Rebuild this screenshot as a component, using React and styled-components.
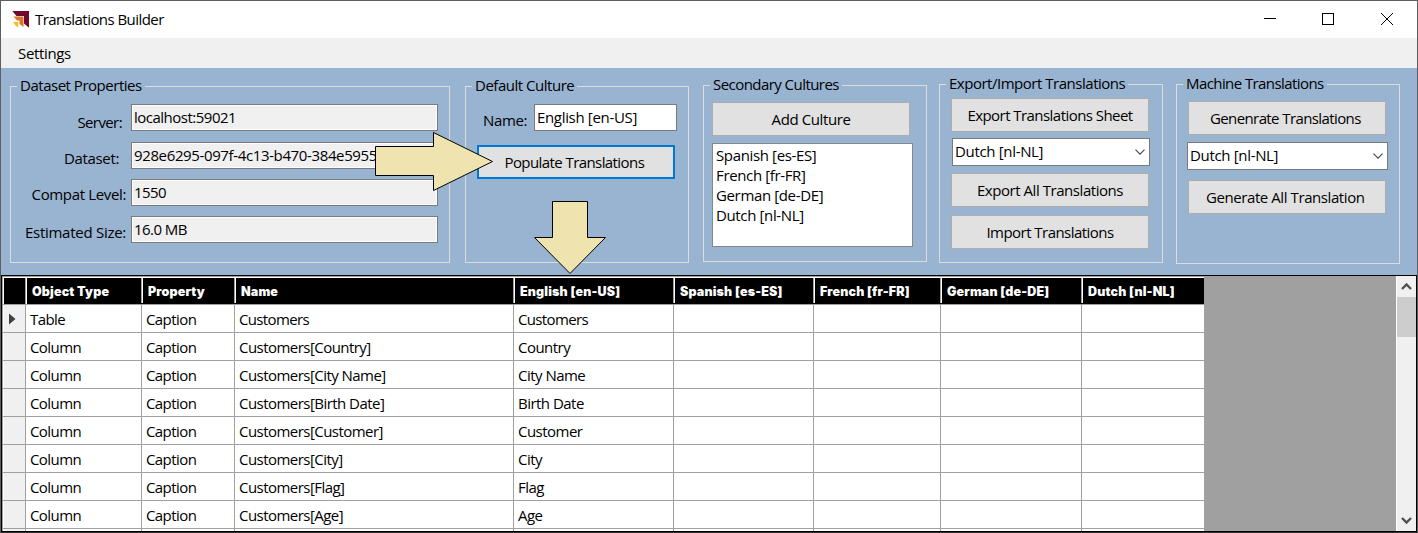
import React from 'react';
import styled, { createGlobalStyle } from 'styled-components';

const Global = createGlobalStyle`
  *{box-sizing:border-box}
  html,body{margin:0;padding:0;overflow:hidden}
  body{font-family:"Open Sans","Noto Sans",sans-serif;font-size:15px;color:#000;}
`;
const Window = styled.div`
  width:1418px;height:533px;display:flex;flex-direction:column;
  border:1px solid #5f5d60;border-bottom-color:#2f2f2f;background:#99b4d1;overflow:hidden;
`;
const Text = styled.span`
  display:block;white-space:pre;line-height:18px;padding-bottom:2px;
  letter-spacing:${p => p.$ls ?? -0.58}px;
`;
const TitleBar = styled.header`
  height:37px;flex:none;background:#fff;display:flex;align-items:center;padding-left:11px;
`;
const Logo = styled.svg`width:18px;height:18px;margin-right:5px;`;
const Controls = styled.svg`margin-left:auto;width:180px;height:37px;`;
const MenuBar = styled.nav`
  height:30px;flex:none;background:#f0f0f0;display:flex;align-items:center;padding:1px 0 0 17px;
`;
const Panel = styled.section`
  height:207px;flex:none;display:flex;align-items:flex-start;padding-left:9px;position:relative;
`;
const Group = styled.fieldset`
  margin:${p => p.$top}px ${p => p.$gap || 0}px 0 0;padding:0;min-width:0;
  width:${p => p.$w}px;height:${p => p.$h}px;border:1px solid #dcdcdc;
  display:flex;flex-direction:column;
`;
const Legend = styled.legend`
  margin:0 0 0 6px;padding:0 3px;height:20px;
`;
const Stack = styled.div`
  display:flex;flex-direction:column;padding:${p => p.$pad};gap:${p => p.$gap || 0}px;
`;
const Field = styled.div`
  display:flex;height:27px;justify-content:flex-end;
  &:nth-child(2){margin-top:1px;}
`;
const FieldLabel = styled(Text)`
  padding-top:${p => p.$pt ?? 9}px;margin-right:${p => p.$mr ?? 6}px;
`;
const Input = styled.div`
  width:${p => p.$w}px;height:27px;flex:none;overflow:hidden;padding:3px 0 0 2px;
  border:1px solid #7a7a7a;background:${p => (p.$ro ? '#f0f0f0' : '#fff')};
  box-shadow:inset 0 0 0 1px #fff;
`;
const Button = styled.button`
  width:198px;height:34px;flex:none;padding:1px 0 0;margin:${p => p.$m || 0};
  display:flex;align-items:center;justify-content:center;font:inherit;color:#000;
  background:#e1e1e1;border:${p => (p.$focus ? '2px solid #0078d7' : '1px solid #adadad')};
`;
const ListBox = styled.div`
  width:201px;height:104px;border:1px solid #828790;background:#fff;padding:2px 3px;
`;
const Select = styled.div`
  width:${p => p.$w}px;height:28px;flex:none;border:1px solid #7a7a7a;background:#fff;
  display:flex;align-items:center;justify-content:space-between;padding:0 4px 0 2px;
  margin:${p => p.$m || 0};
`;
const Arrows = styled.svg`
  position:absolute;left:-1px;top:0;width:700px;height:207px;overflow:visible;z-index:2;
`;
const Grid = styled.section`
  height:257px;flex:none;background:#a0a0a0;border:1px solid #000;display:flex;overflow:hidden;
`;
const Table = styled.div`
  width:1202px;height:255px;padding-left:1px;overflow:hidden;flex:none;background:#a0a0a0;
`;
const Row = styled.div`
  display:grid;grid-template-columns:22px 116px 93px 279px 160px 140px 127px 141px 123px;
`;
const HeadRow = styled(Row)`
  height:28px;background:#000;border-top:1px solid #a0a0a0;box-shadow:inset 0 1px 0 #fff;
  padding-top:1px;
`;
const HeadCorner = styled.div`border-left:1px solid #fff;`;
const HeadCell = styled.div`
  height:${p => (p.$first ? 26 : 25)}px;
  border-left:1px solid #a0a0a0;box-shadow:inset 1px 0 0 #fff;padding:5px 0 0 6px;
`;
const HeadText = styled(Text)`
  font-family:Inter,"Liberation Sans",sans-serif;font-weight:900;font-size:12.5px;color:#fff;
  letter-spacing:0.15px;
`;
const BodyRow = styled(Row)`height:28px;border-top:1px solid #a0a0a0;background:#fff;`;
const RowHead = styled.div`
  background:#f0f0f0;display:flex;align-items:center;padding-left:6px;
  box-shadow:inset 1px 0 0 #fff;
`;
const Cell = styled.div`border-left:1px solid #a0a0a0;padding:5px 0 0 4px;overflow:hidden;`;
const Scroll = styled.div`
  width:20px;height:255px;margin-left:auto;background:#f0f0f0;border-left:1px solid #fff;
  display:flex;flex-direction:column;
`;
const ScrollArrow = styled.svg`width:19px;height:21px;flex:none;`;
const Thumb = styled.div`height:40px;background:#cdcdcd;margin-bottom:auto;`;

const Chevron = () => (
  <svg width="10" height="6" viewBox="0 0 10 6" fill="none" stroke="#444" strokeWidth="1.1"><path d="M.5 .6 5 5.1 9.5 .6" /></svg>
);
const Combo = ({ w, m }) => (
  <Select $w={w} $m={m}><Text $ls={-0.33}>Dutch [nl-NL]</Text><Chevron /></Select>
);

const fields = [
  ['Server:', 'localhost:59021', 9, 9, -0.6, -0.5],
  ['Dataset:', '928e6295-097f-4c13-b470-384e595587c1', 7, 12, -0.35, -0.37],
  ['Compat Level:', '1550', 6, 5, -0.35, -0.55],
  ['Estimated Size:', '16.0 MB', 7, 5, -0.27, -0.55],
];
const heads = ['Object Type', 'Property', 'Name', 'English [en-US]', 'Spanish [es-ES]', 'French [fr-FR]', 'German [de-DE]', 'Dutch [nl-NL]'];
const cultures = ['Spanish [es-ES]', 'French [fr-FR]', 'German [de-DE]', 'Dutch [nl-NL]'];
const rows = ['', 'Country', 'City Name', 'Birth Date', 'Customer', 'City', 'Flag', 'Age'];

export default function App() {
  return (
    <>
      <Global />
      <Window>
        <TitleBar>
          <Logo viewBox="0 0 18 18">
            <path d="M.3 0H17V16.800L12 12.500V5H4.500Z" fill="#6f0a2c" />
            <path d="M1.500 5.500H11.500V16L7.500 13V9.500H5Z" fill="#d9762b" />
            <path d="M1 11H6.300V16.500L4 15Z" fill="#fdc010" />
          </Logo>
          <Text $ls={-0.55}>Translations Builder</Text>
          <Controls viewBox="0 0 180 37" fill="none" stroke="#000" shapeRendering="crispEdges">
            <path d="M27 17.500h12M85.500 12.500h11v11h-11z" />
            <path d="M144 12l12 12M156 12l-12 12" shapeRendering="auto" />
          </Controls>
        </TitleBar>
        <MenuBar><Text $ls={-0.35}>Settings</Text></MenuBar>
        <Panel>
          <Group $top={8} $w={440} $h={187} $gap={15}>
            <Legend><Text $ls={-0.48}>Dataset Properties</Text></Legend>
            <Stack $pad="8px 11px 0 0" $gap={10}>
              {fields.map(([l, v, pt, mr, lls, vls]) => (
                <Field key={l}>
                  <FieldLabel $pt={pt} $mr={mr} $ls={lls}>{l}</FieldLabel>
                  <Input $w={307} $ro><Text $ls={vls}>{v}</Text></Input>
                </Field>
              ))}
            </Stack>
          </Group>
          <Group $top={8} $w={224} $h={187} $gap={14}>
            <Legend><Text $ls={-0.48}>Default Culture</Text></Legend>
            <Stack $pad="8px 11px 0 0">
              <Field><FieldLabel $pt={7} $mr={7} $ls={-0.4}>Name:</FieldLabel><Input $w={143}><Text $ls={-0.33}>English [en-US]</Text></Input></Field>
              <Button $focus $m="14px 0 0 11px"><Text>Populate Translations </Text></Button>
            </Stack>
          </Group>
          <Group $top={7} $w={224} $h={187} $gap={12}>
            <Legend><Text $ls={-0.55}>Secondary Cultures</Text></Legend>
            <Stack $pad="7px 0 0 8px" $gap={7}>
              <Button><Text $ls={-0.4}>Add Culture</Text></Button>
              <ListBox>
                {cultures.map(t => <Text key={t} $ls={-0.36}>{t}</Text>)}
              </ListBox>
            </Stack>
          </Group>
          <Group $top={6} $w={224} $h={189} $gap={13}>
            <Legend><Text $ls={-0.48}>Export/Import Translations</Text></Legend>
            <Stack $pad="4px 0 0 11px">
              <Button><Text $ls={-0.55}>Export Translations Sheet</Text></Button>
              <Combo w={198} m="6px 0 7px 1px" />
              <Button><Text $ls={-0.45}>Export All Translations</Text></Button>
              <Button $m="8px 0 0"><Text $ls={-0.54}>Import Translations</Text></Button>
            </Stack>
          </Group>
          <Group $top={6} $w={224} $h={190}>
            <Legend><Text>Machine Translations</Text></Legend>
            <Stack $pad="7px 0 0 10px">
              <Button $m="0 0 0 1px"><Text $ls={-0.6}>Genenrate Translations </Text></Button>
              <Combo w={201} m="7px 0 10px" />
              <Button $m="0 0 0 1px"><Text $ls={-0.42}>Generate All Translation </Text></Button>
            </Stack>
          </Group>
          <Arrows viewBox="0 0 700 207" fill="#efe4b0" stroke="#000">
            <path d="M375.500 78.500H433.500V64.500L492.500 93.500L433.500 122.500V107.500H375.500Z" />
            <path d="M552.500 133.500H587.500V169.500H605.500L570 205.500L534.500 169.500H552.500Z" />
          </Arrows>
        </Panel>
        <Grid>
          <Table>
            <HeadRow>
              <HeadCorner />
              {heads.map((h, i) => <HeadCell key={h} $first={i === 0}><HeadText>{h}</HeadText></HeadCell>)}
            </HeadRow>
            {rows.map((r, i) => (
              <BodyRow key={i}>
                <RowHead>{i === 0 && <svg width="7" height="12"><path d="M0 .5 6.500 6 0 11.500Z" fill="#404040" /></svg>}</RowHead>
                <Cell><Text>{i ? 'Column' : 'Table'}</Text></Cell>
                <Cell><Text>Caption</Text></Cell>
                <Cell><Text $ls={r ? -0.54 : -0.65}>{r ? `Customers[${r}]` : 'Customers'}</Text></Cell>
                <Cell><Text $ls={r ? -0.52 : -0.65}>{r || 'Customers'}</Text></Cell>
                <Cell /><Cell /><Cell /><Cell />
              </BodyRow>
            ))}
            <BodyRow><RowHead />{heads.map(h => <Cell key={h} />)}</BodyRow>
          </Table>
          <Scroll>
            <ScrollArrow viewBox="0 0 19 21" fill="none" stroke="#505050" strokeWidth="2.4"><path d="M5 13 9.500 8.500 14 13" /></ScrollArrow>
            <Thumb />
            <ScrollArrow viewBox="0 0 19 21" fill="none" stroke="#505050" strokeWidth="2.4"><path d="M5 8 9.500 12.500 14 8" /></ScrollArrow>
          </Scroll>
        </Grid>
      </Window>
    </>
  );
}
